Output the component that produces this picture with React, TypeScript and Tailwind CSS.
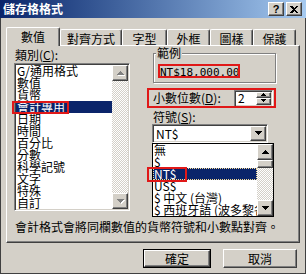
import type { ReactNode } from 'react'

const RAISED =
  'border border-t-white border-l-white border-r-[#404040] border-b-[#404040] shadow-[inset_-1px_-1px_0_#808080]'
const SUNKEN =
  'border border-t-[#808080] border-l-[#808080] border-r-white border-b-white shadow-[inset_1px_1px_0_#404040,inset_-1px_-1px_0_#d4d0c8]'
const CHECKER = 'bg-[image:repeating-conic-gradient(#ffffff_0_25%,#d4d0c8_0_50%)] bg-[length:2px_2px]'

const CATEGORIES = ['G/通用格式', '數值', '貨幣', '會計專用', '日期', '時間', '百分比', '分數', '科學記號', '文字', '特殊', '自訂']
const SYMBOLS = ['無', '$', 'NT$', 'US$', '$ 中文 (台灣)', '$ 西班牙語 (波多黎各)']

// pixel triangle, rows 1,3,5,7...
function Tri({ dir, size = 4, disabled = false }: { dir: 'up' | 'down'; size?: number; disabled?: boolean }) {
  const w = size * 2 - 1
  const rows = Array.from({ length: size }, (_, i) => i)
  const draw = (dx: number, dy: number, fill: string) =>
    rows.map((i) => (
      <rect
        key={`${fill}${i}`}
        x={size - 1 - i + dx}
        y={(dir === 'up' ? i : size - 1 - i) + dy}
        width={2 * i + 1}
        height={1}
        fill={fill}
      />
    ))
  return (
    <svg width={w + 1} height={size + 1} shapeRendering="crispEdges">
      {disabled && draw(1, 1, '#ffffff')}
      {draw(0, 0, disabled ? '#808080' : '#000000')}
    </svg>
  )
}

function ArrowBtn({ dir, disabled, size, className }: { dir: 'up' | 'down'; disabled?: boolean; size?: number; className: string }) {
  return (
    <div className={`${RAISED} bg-[#d4d0c8] flex items-center justify-center pl-[1px] ${className}`}>
      <Tri dir={dir} disabled={disabled} size={size} />
    </div>
  )
}

function Tab({ label, active, w, children }: { label: string; active?: boolean; w: string; children?: ReactNode }) {
  if (active) {
    return (
      <div
        className={`relative z-10 -mb-[1px] h-[19px] ${w} bg-[#d4d0c8] border-t border-l border-r border-t-white border-l-white border-r-[#404040] shadow-[inset_-1px_0_0_#808080] rounded-t-[2px] flex justify-center pt-[3px]`}
      >
        {children ?? label}
      </div>
    )
  }
  return (
    <div
      className={`h-[16px] ${w} border-t border-l border-r border-t-white border-l-white border-r-[#404040] shadow-[inset_-1px_0_0_#808080] rounded-t-[2px] flex justify-center pt-[3px]`}
    >
      {label}
    </div>
  )
}

export default function App() {
  return (
    <div className="relative w-[306px] h-[274px] bg-[#d4d0c8] flex flex-col overflow-hidden text-[12px] leading-[12px] text-black font-[family-name:'Noto_Sans_CJK_TC',sans-serif]">
      {/* Title bar */}
      <div className="h-[18px] shrink-0 flex items-center bg-linear-to-r from-[#0a246a] to-[#a6caf0] pl-[3px] pr-[4px]">
        <span className="text-white font-bold text-[12px] leading-[14px]">儲存格格式</span>
        <div className="ml-auto flex gap-[2px]">
          <div className={`${RAISED} bg-[#d4d0c8] w-[16px] h-[14px] flex items-center justify-center font-['Liberation_Sans',sans-serif] font-bold text-[11px] leading-[11px]`}>
            ?
          </div>
          <div className={`${RAISED} bg-[#d4d0c8] w-[16px] h-[14px] flex items-center justify-center`}>
            <svg width="8" height="7" shapeRendering="crispEdges">
              <path d="M0 0h2l2 2 2-2h2L5 3.5 8 7H6L4 5 2 7H0l3-3.5z" fill="#000" />
            </svg>
          </div>
        </div>
      </div>

      {/* Body */}
      <div className="flex-1 flex flex-col border-x border-b border-[#404040] pl-[5px] pt-[9px]">
        {/* Tabs */}
        <div className="h-[18px] flex items-end">
          <Tab label="數值" active w="w-[54px]" />
          <Tab label="對齊方式" w="w-[62px]" />
          <Tab label="字型" w="w-[45px]" />
          <Tab label="外框" w="w-[43px]" />
          <Tab label="圖樣" w="w-[43px]" />
          <Tab label="保護" w="w-[43px]" />
        </div>

        {/* Panel */}
        <div className="h-[198px] w-[294px] border border-t-white border-l-white border-r-[#404040] border-b-[#404040] shadow-[inset_-1px_-1px_0_#808080] flex flex-col">
          <div className="h-[174px] flex">
            {/* Category column */}
            <div className="pl-[7px] flex flex-col">
              <div className="mt-[3px] pl-[1px]">
                類別(<u>C</u>):
              </div>
              <div className={`${SUNKEN} mt-[2px] w-[116px] h-[148px] bg-white p-[1px] flex`}>
                <div className="flex-1 flex flex-col">
                  {CATEGORIES.map((c) => (
                    <div
                      key={c}
                      className={`h-[12px] pl-[1px] whitespace-nowrap ${c === '會計專用' ? 'bg-[#0a246a] text-white' : ''}`}
                    >
                      {c}
                    </div>
                  ))}
                </div>
                <div className="w-[16px] flex flex-col">
                  <ArrowBtn dir="up" disabled className="h-[16px]" />
                  <div className={`flex-1 ${CHECKER}`} />
                  <ArrowBtn dir="down" disabled className="h-[16px]" />
                </div>
              </div>
            </div>

            {/* Right column */}
            <div className="ml-[17px] w-[129px] flex flex-col">
              <div className="relative mt-[7px] ml-[6px] w-[123px] h-[30px] border border-[#808080] shadow-[inset_1px_1px_0_#ffffff,1px_1px_0_#ffffff] pl-[6px] pt-[11px]">
                <span className="absolute -top-[7px] left-[2px] px-[1px] bg-[#d4d0c8]">範例</span>
                <span className="font-['DejaVu_Sans_Mono',monospace] text-[11px] leading-[12px]">NT$18,000.00</span>
              </div>

              <div className="mt-[5px] h-[20px] flex items-center pl-[6px] pr-[3px]">
                <span>
                  小數位數(<u>D</u>):
                </span>
                <div className={`${SUNKEN} ml-auto w-[39px] h-[17px] bg-white p-[1px] flex`}>
                  <div className="flex-1 pl-[2px] flex items-center">2</div>
                  <div className="w-[15px] flex flex-col">
                    <ArrowBtn dir="up" size={3} className="flex-1" />
                    <ArrowBtn dir="down" size={3} className="flex-1" />
                  </div>
                </div>
              </div>

              <div className="mt-[3px] ml-[6px]">
                符號(<u>S</u>):
              </div>

              <div className={`${SUNKEN} mt-[1px] ml-[5px] w-[116px] h-[19px] bg-white p-[1px] flex`}>
                <div className="flex-1 pl-[2px] flex items-center">NT$</div>
                <ArrowBtn dir="down" className="w-[16px]" />
              </div>

              <div className="ml-[5px] w-[122px] h-[74px] border border-black bg-white flex">
                <div className="flex-1 flex flex-col overflow-hidden">
                  {SYMBOLS.map((s) => (
                    <div
                      key={s}
                      className={`h-[12px] pl-[1px] whitespace-nowrap ${
                        s === 'NT$' ? 'bg-[#0a246a] text-white outline outline-dotted outline-[#f5db95] -outline-offset-1' : ''
                      }`}
                    >
                      {s}
                    </div>
                  ))}
                </div>
                <div className="w-[16px] flex flex-col">
                  <ArrowBtn dir="up" className="h-[16px]" />
                  <div className={`${RAISED} bg-[#d4d0c8] h-[8px]`} />
                  <div className={`flex-1 ${CHECKER}`} />
                  <ArrowBtn dir="down" className="h-[16px]" />
                </div>
              </div>
            </div>
          </div>

          <div className="mt-[1px] pl-[8px] whitespace-nowrap">會計格式會將同欄數值的貨幣符號和小數點對齊。</div>
        </div>

        {/* Buttons */}
        <div className="mt-[6px] flex justify-end gap-[12px] pr-[8px]">
          <div className="w-[68px] h-[19px] border border-black">
            <div className={`${RAISED} h-full flex items-center justify-center`}>確定</div>
          </div>
          <div className={`${RAISED} w-[74px] h-[19px] flex items-center justify-center`}>取消</div>
        </div>
      </div>

      {/* Red annotation boxes */}
      <div className="absolute left-[12px] top-[31px] w-[43px] h-[14px] border-[1.5px] border-[#e01818]" />
      <div className="absolute left-[158px] top-[64px] w-[82px] h-[14px] border-2 border-[#e01818]" />
      <div className="absolute left-[12px] top-[101px] w-[57px] h-[13px] border-2 border-[#e01818]" />
      <div className="absolute left-[147px] top-[88px] w-[129px] h-[20px] border-2 border-[#e01818]" />
      <div className="absolute left-[147px] top-[167px] w-[40px] h-[15px] border-2 border-[#e01818]" />
    </div>
  )
}
